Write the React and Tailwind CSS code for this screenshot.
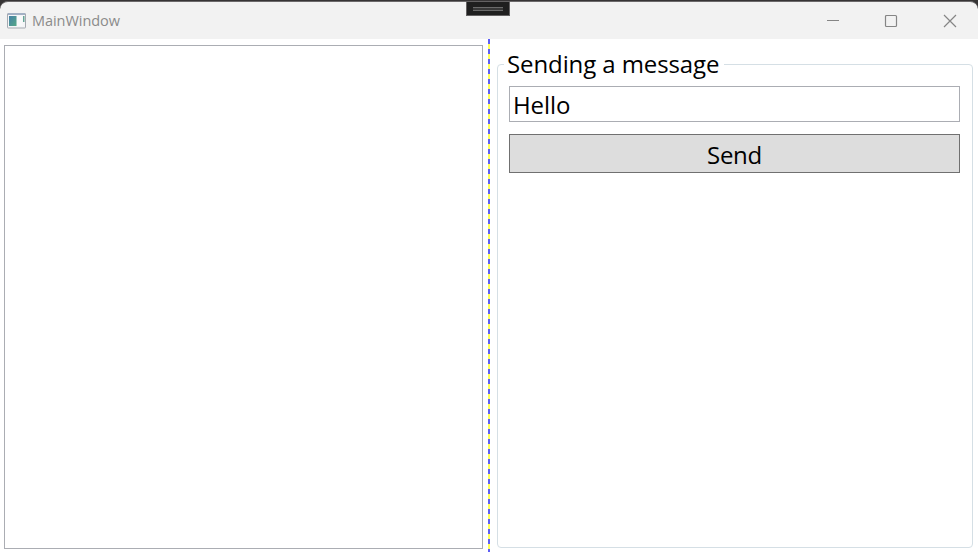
function AppIcon() {
  return (
    <svg width="19" height="16" viewBox="0 0 19 16" className="shrink-0">
      <defs>
        <linearGradient id="pane" x1="0" y1="0" x2="1" y2="1">
          <stop offset="0" stopColor="#4580a8" />
          <stop offset="1" stopColor="#55a886" />
        </linearGradient>
      </defs>
      <rect x="0.5" y="0.5" width="18" height="14.5" rx="0.5" fill="#f4f5f7" stroke="#a5a9b0" />
      <rect x="1" y="0" width="17" height="2" fill="#a3b0c4" />
      <rect x="2" y="3" width="7.5" height="10" fill="url(#pane)" />
      <rect x="10" y="3" width="5.5" height="10" fill="#f8f9fa" />
      <rect x="16" y="3" width="1.5" height="6" fill="#66a596" />
    </svg>
  );
}

function TitleBar() {
  return (
    <header className="relative h-[39px] shrink-0 bg-[#363435] pt-px">
      <div className="flex h-[38px] items-center rounded-t-[8px] border-t border-[#6b696a] bg-[#f2f2f2] pl-[7px]">
        <AppIcon />
        <span className="ml-[6px] text-[14.5px] leading-5 tracking-[-0.05px] text-[#8b8b8b]">MainWindow</span>
        <svg width="132" height="14" viewBox="0 0 132 14" className="mr-[20px] ml-auto" fill="none" stroke="#858585">
          <path d="M1 6.5H13" />
          <rect x="59.5" y="1.5" width="11" height="11" rx="1" strokeWidth="1.2" />
          <path d="M118 1L130 13M130 1L118 13" strokeWidth="1.2" />
        </svg>
      </div>
      <div className="absolute top-px left-[466px] flex h-[15px] w-[44px] flex-col items-center border border-[#636162] bg-[#1f1f1f] pt-[5px]">
        <div className="h-[4px] w-[30px] border-y border-[#6a6a6a] bg-[#383838]" />
      </div>
    </header>
  );
}

export default function App() {
  return (
    <div className="flex h-[552px] w-[978px] flex-col overflow-hidden bg-white font-['Open_Sans','Noto_Sans',sans-serif] text-black">
      <TitleBar />
      <main className="flex min-h-0 flex-1">
        <div className="mt-[6px] mb-[3px] ml-[4px] w-[479px] border border-[#abadb3]" />
        <div className="ml-[5px] w-[2px] bg-[repeating-linear-gradient(to_bottom,#5f5ff5_0px,#5f5ff5_5px,#ffff5c_5px,#ffff5c_10px)]" />
        <fieldset className="mt-[8px] mb-[4px] ml-[7px] w-[476px] rounded-[4px] border border-[#d5dfe5] pr-[12px] pl-[11px]">
          <legend className="ml-[-5px] h-[35px] w-[220px] pl-[3px] text-[24px] leading-[33px] tracking-[-0.1px] whitespace-nowrap">
            Sending a message
          </legend>
          <div className="flex flex-col gap-3 pt-[4px]">
            <input
              defaultValue="Hello"
              className="h-[36px] w-full border border-[#abadb3] bg-white px-[3px] text-[24px] leading-[34px] tracking-[-0.1px] outline-none"
            />
            <button className="h-[39px] w-full border border-[#707070] bg-[#dddddd] pt-[2px] text-[24px] leading-[35px] tracking-[-0.3px]">
              Send
            </button>
          </div>
        </fieldset>
      </main>
    </div>
  );
}
